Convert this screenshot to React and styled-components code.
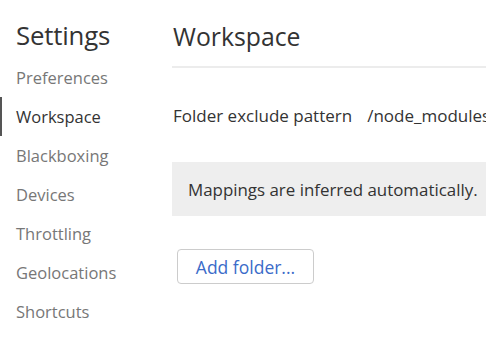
import styled, { createGlobalStyle } from "styled-components"

const GlobalStyle = createGlobalStyle`
  html, body {
    margin: 0;
    padding: 0;
    background: #ffffff;
    overflow: hidden;
  }
  body {
    font-family: "Open Sans", "Noto Sans", sans-serif;
  }
`

const Page = styled.div`
  display: flex;
  width: 486px;
  height: 339px;
  overflow: hidden;
`

const Sidebar = styled.nav`
  flex: 0 0 172px;
  display: flex;
  flex-direction: column;
`

const SideTitle = styled.h1`
  margin: 0;
  padding: 17px 0 0 16px;
  height: 41px;
  font-size: 25.8px;
  font-weight: 400;
  color: #333333;
  line-height: 36px;
  letter-spacing: -0.2px;
`

const TabList = styled.div`
  display: flex;
  flex-direction: column;
`

const TabItem = styled.div`
  height: 39px;
  display: flex;
  align-items: center;
  padding-left: 14px;
  font-size: 16.5px;
  color: ${(p) => (p.$active ? "#333333" : "#777777")};
  border-left: 2px solid ${(p) => (p.$active ? "#555555" : "transparent")};
`

const Content = styled.main`
  flex: 1;
  min-width: 0;
  display: flex;
  flex-direction: column;
`

const Header = styled.div`
  padding: 17px 0 0 1px;
  height: 49px;
  border-bottom: 2px solid #ececec;
`

const Title = styled.h2`
  margin: 0;
  font-size: 24.8px;
  font-weight: 400;
  color: #333333;
  line-height: 38px;
`

const FieldRow = styled.label`
  display: flex;
  align-items: center;
  gap: 15px;
  padding: 26px 0 0 1px;
  height: 42px;
  font-size: 17px;
  color: #333333;
  white-space: nowrap;
`

const PatternInput = styled.input`
  flex: 1;
  min-width: 0;
  border: none;
  outline: none;
  padding: 0;
  background: transparent;
  font-family: inherit;
  font-size: 17px;
  color: #333333;
`

const InfoBox = styled.div`
  margin-top: 26px;
  height: 54px;
  display: flex;
  align-items: center;
  padding-left: 16px;
  background: #eeeeee;
  font-size: 16.9px;
  color: #333333;
  white-space: nowrap;
`

const Actions = styled.div`
  padding: 33px 0 0 5px;
`

const Button = styled.button`
  width: 137px;
  height: 35px;
  border: 1px solid #cccccc;
  border-radius: 4px;
  background: #ffffff;
  color: #3b6bc9;
  font-family: inherit;
  font-size: 17.5px;
  font-weight: 500;
  padding: 0;
`

const tabs = [
  "Preferences",
  "Workspace",
  "Blackboxing",
  "Devices",
  "Throttling",
  "Geolocations",
  "Shortcuts",
]

export default function App() {
  return (
    <>
      <GlobalStyle />
      <Page>
        <Sidebar>
          <SideTitle>Settings</SideTitle>
          <TabList>
            {tabs.map((t) => (
              <TabItem key={t} $active={t === "Workspace"}>
                {t}
              </TabItem>
            ))}
          </TabList>
        </Sidebar>
        <Content>
          <Header>
            <Title>Workspace</Title>
          </Header>
          <FieldRow>
            <span>Folder exclude pattern</span>
            <PatternInput readOnly value="/node_modules/|/bower_components/" />
          </FieldRow>
          <InfoBox>Mappings are inferred automatically.</InfoBox>
          <Actions>
            <Button>Add folder...</Button>
          </Actions>
        </Content>
      </Page>
    </>
  )
}
